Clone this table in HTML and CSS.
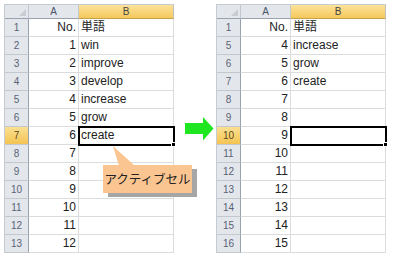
FILE: index.html
```html
<!DOCTYPE html>
<html lang="ja">
<head>
<meta charset="utf-8">
<link rel="stylesheet" href="styles.css">
</head>
<body>
<div class="page">
  <div class="sheet">
    <div class="hd corner"><span class="tri"></span></div><div class="hd">A</div><div class="hd sel-col">B</div>
    <div class="rh">1</div><div class="c num">No.</div><div class="c">単語</div>
    <div class="rh">2</div><div class="c num">1</div><div class="c">win</div>
    <div class="rh">3</div><div class="c num">2</div><div class="c">improve</div>
    <div class="rh">4</div><div class="c num">3</div><div class="c">develop</div>
    <div class="rh">5</div><div class="c num">4</div><div class="c">increase</div>
    <div class="rh">6</div><div class="c num">5</div><div class="c">grow</div>
    <div class="rh sel-row">7</div><div class="c num">6</div><div class="c active">create</div>
    <div class="rh">8</div><div class="c num">7</div><div class="c"></div>
    <div class="rh">9</div><div class="c num">8</div><div class="c"></div>
    <div class="rh">10</div><div class="c num">9</div><div class="c"></div>
    <div class="rh">11</div><div class="c num">10</div><div class="c"></div>
    <div class="rh">12</div><div class="c num">11</div><div class="c"></div>
    <div class="rh">13</div><div class="c num">12</div><div class="c"></div>
  </div>

  <div class="arrow">
    <svg width="29" height="24" viewBox="0 0 29 24"><polygon points="0,6 18,6 18,0 28.5,11.5 18,23.5 18,17 0,17" fill="#1ee620"/></svg>
  </div>

  <div class="sheet">
    <div class="hd corner"><span class="tri"></span></div><div class="hd">A</div><div class="hd sel-col">B</div>
    <div class="rh">1</div><div class="c num">No.</div><div class="c">単語</div>
    <div class="rh">5</div><div class="c num">4</div><div class="c">increase</div>
    <div class="rh">6</div><div class="c num">5</div><div class="c">grow</div>
    <div class="rh">7</div><div class="c num">6</div><div class="c">create</div>
    <div class="rh">8</div><div class="c num">7</div><div class="c"></div>
    <div class="rh">9</div><div class="c num">8</div><div class="c"></div>
    <div class="rh sel-row">10</div><div class="c num">9</div><div class="c active"></div>
    <div class="rh">11</div><div class="c num">10</div><div class="c"></div>
    <div class="rh">12</div><div class="c num">11</div><div class="c"></div>
    <div class="rh">13</div><div class="c num">12</div><div class="c"></div>
    <div class="rh">14</div><div class="c num">13</div><div class="c"></div>
    <div class="rh">15</div><div class="c num">14</div><div class="c"></div>
    <div class="rh">16</div><div class="c num">15</div><div class="c"></div>
  </div>

  <div class="callout">
    <svg class="pointer" width="26" height="22" viewBox="0 0 26 22"><polygon points="0,0 22,20 6,20" fill="#fbc591"/></svg>
    <div class="bubble">アクティブセル</div>
  </div>
</div>
</body>
</html>
```
FILE: styles.css
```css
html, body {
  margin: 0;
  padding: 0;
  background: #ffffff;
}
.page {
  position: relative;
  width: 394px;
  height: 259px;
  padding: 4px 0 0 4px;
  box-sizing: border-box;
  display: flex;
  align-items: flex-start;
  font-family: "Liberation Sans", "Noto Sans CJK JP", sans-serif;
}
.sheet {
  display: grid;
  grid-template-columns: 24px 50px 95px;
  grid-template-rows: 14px repeat(13, 18px);
  border-top: 1px solid #c5cbd3;
  border-left: 1px solid #c5cbd3;
}
.hd {
  background: #e3e7ec;
  border-right: 1px solid #c3c8cf;
  border-bottom: 1px solid #9aa3ad;
  box-sizing: border-box;
  font-size: 10px;
  color: #4a5468;
  text-align: center;
  line-height: 13px;
}
.corner {
  position: relative;
}
.tri {
  position: absolute;
  right: 2px;
  bottom: 2px;
  width: 0;
  height: 0;
  border-left: 7px solid transparent;
  border-bottom: 7px solid #c9cdd2;
}
.sel-col {
  background: linear-gradient(#fbe39b, #f5c85c);
  border-bottom: 1px solid #c6a24a;
  border-right: 1px solid #c0c0c0;
  color: #444444;
}
.rh {
  background: #e3e7ec;
  border-right: 1px solid #9aa3ad;
  border-bottom: 1px solid #c3c8cf;
  box-sizing: border-box;
  font-size: 10px;
  color: #5a6275;
  text-align: center;
  line-height: 18px;
}
.sel-row {
  background: linear-gradient(#fbe092, #f4c452);
  color: #5a4a20;
}
.c {
  border-right: 1px solid #dadcdd;
  border-bottom: 1px solid #dadcdd;
  box-sizing: border-box;
  font-size: 12px;
  color: #222222;
  line-height: 17px;
  padding: 0 2px;
  white-space: nowrap;
  position: relative;
}
.num {
  text-align: right;
}
.active {
  outline: 2px solid #000000;
  outline-offset: -1px;
  z-index: 2;
}
.active::after {
  content: "";
  position: absolute;
  right: -3px;
  bottom: -3px;
  width: 5px;
  height: 5px;
  background: #000000;
  border: 1px solid #ffffff;
  box-sizing: border-box;
}
.arrow {
  margin: 113px 2px 0 11px;
  line-height: 0;
}
.callout {
  position: absolute;
  left: 103px;
  top: 146px;
}
.pointer {
  position: absolute;
  left: 10px;
  top: 0;
}
.bubble {
  margin-top: 19px;
  width: 89px;
  height: 28px;
  background: #fbc591;
  box-shadow: 5px 4px 0 #a6a6a6;
  font-size: 12.5px;
  color: #222222;
  line-height: 28px;
  text-align: center;
  font-family: "Noto Sans CJK JP", sans-serif;
}
```
